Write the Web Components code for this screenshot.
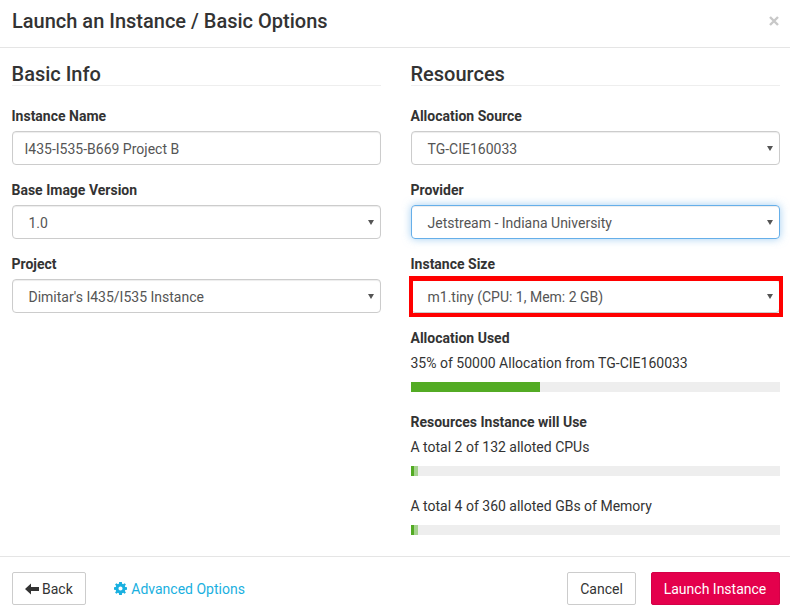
<!DOCTYPE html>
<html>
<head>
<meta charset="utf-8">
<style>
    html, body { margin: 0; background: #fff; }
    body { font-family: Roboto, "Liberation Sans", sans-serif; font-size: 14px; color: #333; }
</style>
</head>
<body>
<launch-modal>
    <span slot="title">Launch an Instance / Basic Options</span>
    <form-section slot="left" heading="Basic Info">
        <form-field label="Instance Name"><text-box value="I435-I535-B669 Project B"></text-box></form-field>
        <form-field label="Base Image Version"><select-box>1.0</select-box></form-field>
        <form-field label="Project"><select-box>Dimitar's I435/I535 Instance</select-box></form-field>
    </form-section>
    <form-section slot="right" heading="Resources">
        <form-field label="Allocation Source"><select-box>TG-CIE160033</select-box></form-field>
        <form-field label="Provider"><select-box focused>Jetstream - Indiana University</select-box></form-field>
        <form-field label="Instance Size"><select-box marked>m1.tiny (CPU: 1, Mem: 2 GB)</select-box></form-field>
        <usage-bar label="Allocation Used" text="35% of 50000 Allocation from TG-CIE160033" used="35"></usage-bar>
        <usage-bar label="Resources Instance will Use" text="A total 2 of 132 alloted CPUs" used="1" added="1"></usage-bar>
        <usage-bar text="A total 4 of 360 alloted GBs of Memory" used="1" added="1"></usage-bar>
    </form-section>
    <action-button slot="footer-left" icon="back">Back</action-button>
    <action-button slot="footer-left" kind="link" icon="gear">Advanced Options</action-button>
    <action-button slot="footer-right">Cancel</action-button>
    <action-button slot="footer-right" kind="primary">Launch Instance</action-button>
</launch-modal>

<script>
class LaunchModal extends HTMLElement {
    constructor() {
        super();
        this.attachShadow({ mode: 'open' });
        this.shadowRoot.innerHTML = `
            <style>
                :host { display: block; width: 790px; height: 616px; overflow: hidden; }
                header {
                    display: flex;
                    justify-content: space-between;
                    align-items: center;
                    height: 47px;
                    padding: 0 11px 5px 12px;
                    box-sizing: border-box;
                }
                h2 { margin: 0; font-size: 20px; font-weight: 500; line-height: 42px; color: #333; }
                .close { width: 10px; height: 10px; margin-bottom: 1px; }
                hr { margin: 0; border: 0; height: 1px; background: #e5e5e5; }
                main {
                    display: grid;
                    grid-template-columns: 369px 369px;
                    column-gap: 30px;
                    height: 508px;
                    padding: 0 10px 0 11.5px;
                    box-sizing: border-box;
                }
                footer {
                    display: flex;
                    justify-content: space-between;
                    padding: 15px 10px 0 12px;
                }
                .side { display: flex; align-items: center; }
                .side.l { gap: 15px; }
                .side.r { gap: 15px; }
            </style>
            <header>
                <h2><slot name="title"></slot></h2>
                <svg class="close" viewBox="0 0 10 10"><path d="M1 1l8 8M9 1l-8 8" stroke="#c8c8c8" stroke-width="2.4"/></svg>
            </header>
            <hr>
            <main>
                <div><slot name="left"></slot></div>
                <div><slot name="right"></slot></div>
            </main>
            <hr>
            <footer>
                <div class="side l"><slot name="footer-left"></slot></div>
                <div class="side r"><slot name="footer-right"></slot></div>
            </footer>
        `;
    }
}

class FormSection extends HTMLElement {
    constructor() {
        super();
        this.attachShadow({ mode: 'open' });
    }

    connectedCallback() {
        this.shadowRoot.innerHTML = `
            <style>
                :host { display: block; }
                h3 {
                    margin: 14px 0 20px;
                    height: 23px;
                    font-size: 20px;
                    line-height: 24px;
                    font-weight: 500;
                    color: #333;
                    border-bottom: 1px solid #eee;
                }
            </style>
            <h3>${this.getAttribute('heading')}</h3>
            <slot></slot>
        `;
    }
}

class FormField extends HTMLElement {
    constructor() {
        super();
        this.attachShadow({ mode: 'open' });
    }

    connectedCallback() {
        this.shadowRoot.innerHTML = `
            <style>
                :host { display: block; margin-bottom: 15px; }
                label { display: block; margin-bottom: 5px; font-size: 14px; line-height: 20px; font-weight: 700; color: #333; }
            </style>
            <label>${this.getAttribute('label')}</label>
            <slot></slot>
        `;
    }
}

class TextBox extends HTMLElement {
    constructor() {
        super();
        this.attachShadow({ mode: 'open' });
    }

    connectedCallback() {
        this.shadowRoot.innerHTML = `
            <style>
                :host { display: block; }
                div {
                    height: 34px;
                    box-sizing: border-box;
                    padding: 7px 12px 5px;
                    border: 1px solid #ccc;
                    border-radius: 4px;
                    box-shadow: inset 0 1px 1px rgba(0,0,0,.075);
                    font-size: 14px;
                    line-height: 20px;
                    color: #555;
                }
            </style>
            <div>${this.getAttribute('value')}</div>
        `;
    }
}

class SelectBox extends HTMLElement {
    constructor() {
        super();
        this.attachShadow({ mode: 'open' });
        this.shadowRoot.innerHTML = `
            <style>
                :host { display: block; position: relative; }
                .box {
                    display: flex;
                    justify-content: space-between;
                    align-items: center;
                    height: 34px;
                    box-sizing: border-box;
                    padding: 0 6px 0 16px;
                    border: 1px solid #ccc;
                    border-radius: 4px;
                    box-shadow: inset 0 1px 1px rgba(0,0,0,.075);
                    font-size: 14px;
                    color: #555;
                }
                .box span { padding-top: 2px; }
                :host([focused]) .box {
                    border-color: #66afe9;
                    box-shadow: inset 0 1px 1px rgba(0,0,0,.075), 0 0 8px rgba(102,175,233,.6);
                }
                svg { width: 6px; height: 5px; }
                .mark {
                    display: none;
                    position: absolute;
                    left: -2px; right: -3px; top: -3px; bottom: -4px;
                    border: 4px solid #f00;
                    border-top-width: 5px;
                }
                :host([marked]) .mark { display: block; }
            </style>
            <div class="box">
                <span><slot></slot></span>
                <svg viewBox="0 0 6 5"><path d="M0 0h6L3 5z" fill="#555"/></svg>
            </div>
            <div class="mark"></div>
        `;
    }
}

class UsageBar extends HTMLElement {
    constructor() {
        super();
        this.attachShadow({ mode: 'open' });
    }

    connectedCallback() {
        const label = this.getAttribute('label');
        const used = this.getAttribute('used');
        const added = this.getAttribute('added') || 0;
        this.shadowRoot.innerHTML = `
            <style>
                :host { display: block; margin-bottom: 20px; }
                label { display: block; margin-bottom: 5px; font-size: 14px; line-height: 20px; font-weight: 700; color: #333; }
                p { margin: 0 0 9px; font-size: 14px; line-height: 20px; color: #333; }
                .track { display: flex; height: 10px; background: #eee; }
                .used { background: #53ab24; }
                .added { background: #a5d28e; }
            </style>
            ${label ? `<label>${label}</label>` : ''}
            <p>${this.getAttribute('text')}</p>
            <div class="track">
                <div class="used" style="width:${used}%"></div>
                <div class="added" style="width:${added}%"></div>
            </div>
        `;
    }
}

class ActionButton extends HTMLElement {
    constructor() {
        super();
        this.attachShadow({ mode: 'open' });
    }

    connectedCallback() {
        const icons = {
            back: '<svg width="14" height="12" viewBox="0 0 14 12"><path d="M0 6L6 .5V4h8v4H6v3.5z" fill="#333"/></svg>',
            // chunky eight-tooth cog with a small hole
            gear: '<svg width="13" height="13" viewBox="0 0 24 24"><path fill="#1ab0e0" fill-rule="evenodd" d="M14.500 0l.5 3.300 1.900.8L19.600 2.100 22 4.500l-2 2.700.8 1.900 3.200.5v4.800l-3.200.5-.8 1.900 2 2.700-2.400 2.400-2.700-2-1.900.8-.5 3.300h-5l-.5-3.300-1.900-.8-2.700 2L2 19.500l2-2.700-.8-1.900L0 14.400V9.600l3.200-.5.8-1.900-2-2.700L4.400 2.100l2.700 2 1.900-.8.500-3.300zM12 8.200a3.800 3.800 0 1 0 0 7.600 3.800 3.800 0 0 0 0-7.600z"/></svg>'
        };
        const icon = icons[this.getAttribute('icon')] || '';
        this.shadowRoot.innerHTML = `
            <style>
                :host { display: inline-block; }
                .btn {
                    display: flex;
                    align-items: center;
                    justify-content: center;
                    gap: 3px;
                    height: 33px;
                    box-sizing: border-box;
                    padding: 0 12px;
                    border: 1px solid #ccc;
                    border-radius: 2px;
                    background: #fff;
                    font-size: 14px;
                    color: #333;
                }
                :host([slot="footer-right"]) .btn { width: 69px; padding: 0; }
                :host([kind="primary"]) .btn { width: 129px; padding-right: 1px; background: #e4004c; border-color: #d40047; color: #fff; }
                :host([kind="link"]) .btn { gap: 4.5px; border-color: transparent; background: none; color: #1ab0e0; }
            </style>
            <div class="btn">${icon}<span><slot></slot></span></div>
        `;
    }
}

customElements.define('launch-modal', LaunchModal);
customElements.define('form-section', FormSection);
customElements.define('form-field', FormField);
customElements.define('text-box', TextBox);
customElements.define('select-box', SelectBox);
customElements.define('usage-bar', UsageBar);
customElements.define('action-button', ActionButton);
</script>
</body>
</html>
